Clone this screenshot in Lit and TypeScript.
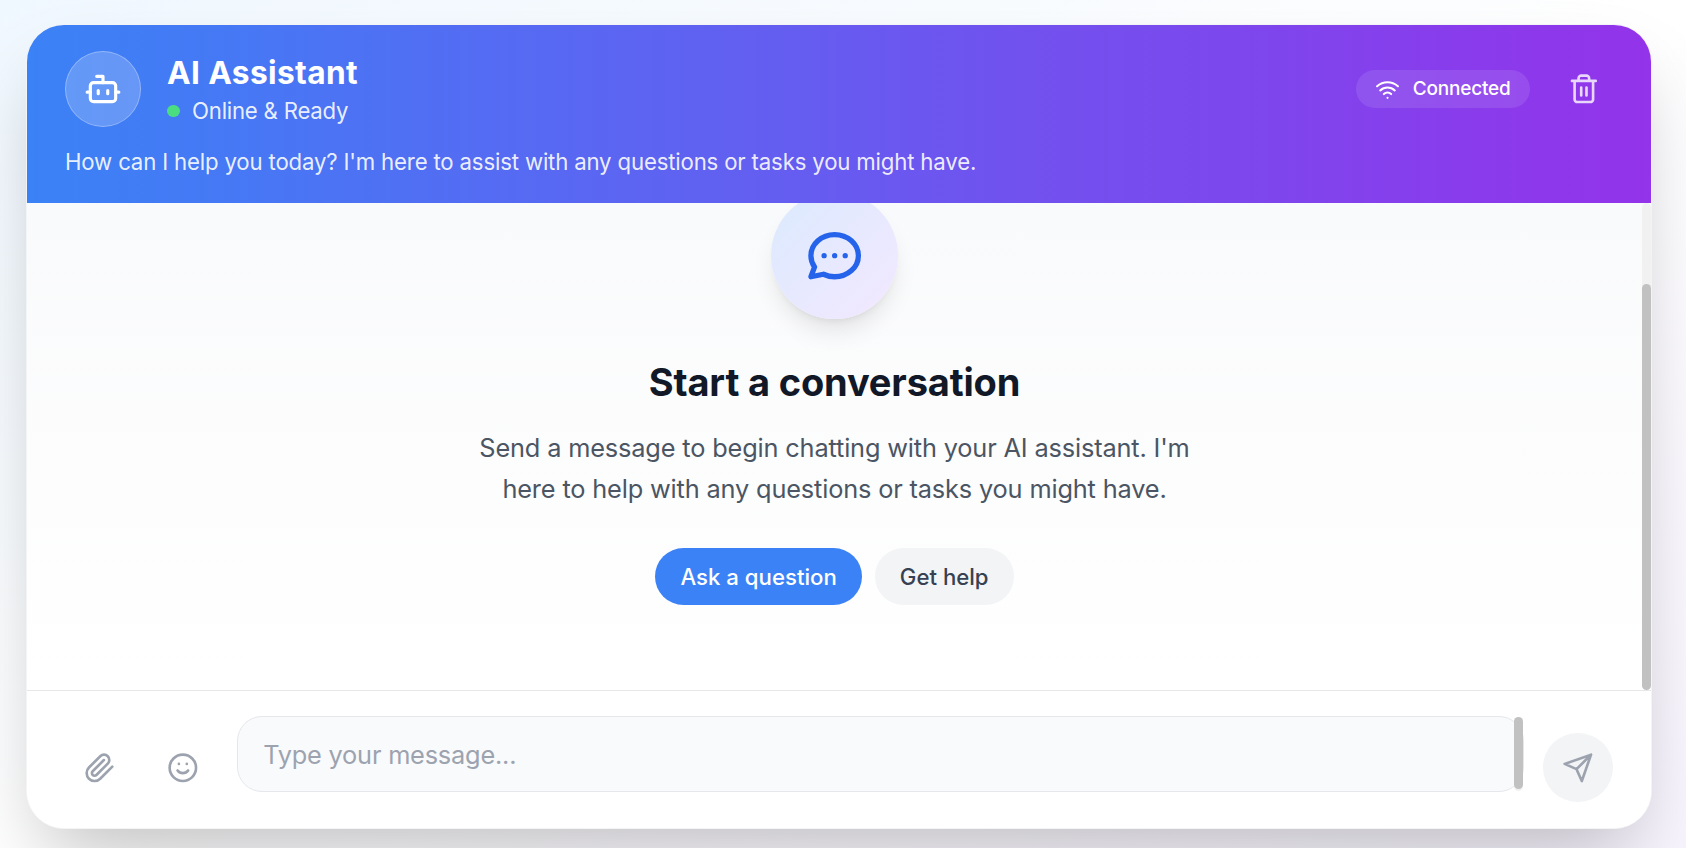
import { LitElement, html, css, svg } from "lit";
import { customElement } from "lit/decorators.js";

const icons = {
  bot: svg`<path d="M12 8V4H8"/><rect width="16" height="12" x="4" y="8" rx="2"/><path d="M2 14h2M20 14h2M15 13v2M9 13v2"/>`,
  wifi: svg`<path d="M12 20h.01M2 8.82a15 15 0 0 1 20 0M5 12.859a10 10 0 0 1 14 0M8.5 16.429a5 5 0 0 1 7 0"/>`,
  trash: svg`<path d="M3 6h18M19 6v14c0 1-1 2-2 2H7c-1 0-2-1-2-2V6M8 6V4c0-1 1-2 2-2h4c1 0 2 1 2 2v2M10 11v6M14 11v6"/>`,
  chat: svg`<path d="M8 12h.01M12 12h.01M16 12h.01M21 12c0 4.418-4.03 8-9 8a9.863 9.863 0 01-4.255-.949L3 20l1.395-3.72C3.512 15.042 3 13.574 3 12c0-4.418 4.03-8 9-8s9 3.582 9 8z"/>`,
  clip: svg`<path d="m21.44 11.05-9.19 9.19a6 6 0 0 1-8.49-8.49l8.57-8.57A4 4 0 1 1 18 8.84l-8.59 8.57a2 2 0 0 1-2.83-2.83l8.49-8.48"/>`,
  smile: svg`<circle cx="12" cy="12" r="10"/><path d="M8 14s1.5 2 4 2 4-2 4-2M9 9h.01M15 9h.01"/>`,
  send: svg`<path d="m22 2-7 20-4-9-9-4ZM22 2 11 13"/>`,
};

const icon = (name: keyof typeof icons, cls = "") =>
  html`<svg class="icon ${cls}" viewBox="0 0 24 24">${icons[name]}</svg>`;

@customElement("app-root")
export class AppRoot extends LitElement {
  static styles = css`
    :host {
      display: block;
      box-sizing: border-box;
      width: 100vw;
      height: 848px;
      overflow: hidden;
      padding: 24px 34px 19px 26px;
      background: linear-gradient(to bottom right, #f0f8ff, #ffffff 50%, #f9f5ff);
      font-family: Inter, sans-serif;
      color: #111827;
    }
    * { box-sizing: border-box; margin: 0; }
    .icon {
      width: 31.7px; height: 31.7px; display: block; flex: none;
      fill: none; stroke: currentColor; stroke-width: 2;
      stroke-linecap: round; stroke-linejoin: round;
    }
    .card {
      height: 805px;
      display: flex; flex-direction: column;
      border: 1px solid #f3f4f6;
      border-radius: 38px;
      overflow: hidden;
      background: #fff;
      box-shadow: 0 40px 79px -19px rgba(0, 0, 0, 0.25);
    }
    .header {
      height: 178px; flex: none;
      padding: 26px 38px 0;
      background: linear-gradient(to right, #3b82f6, #9333ea);
      color: #fff;
    }
    .bar { display: flex; align-items: center; height: 76px; }
    .avatar {
      width: 76px; height: 76px; margin-right: 26px;
      display: grid; place-items: center;
      border-radius: 50%;
      background: rgba(255, 255, 255, 0.2);
      border: 1px solid rgba(255, 255, 255, 0.3);
    }
    .avatar .icon { width: 38px; height: 38px; }
    .who { flex: 1; }
    .name { font-size: 31.7px; line-height: 44px; font-weight: 700; letter-spacing: 0.36px; }
    .status {
      display: flex; align-items: center; gap: 12px;
      font-size: 22.2px; line-height: 32px; letter-spacing: -0.22px; color: rgba(255, 255, 255, 0.9);
    }
    .dot { width: 13px; height: 12.5px; border-radius: 50%; background: #4ade80; }
    .pill {
      display: flex; align-items: center; gap: 12.5px;
      height: 38px; padding: 0 19.7px 0 19px; border-radius: 19px;
      background: rgba(255, 255, 255, 0.1);
      font-size: 19px; font-weight: 500; letter-spacing: -0.2px;
    }
    .pill span { padding-bottom: 1px; }
    .pill .icon { width: 25px; height: 25px; }
    .trash { margin: 0 13px 0 38px; color: rgba(255, 255, 255, 0.8); }
    .intro {
      margin-top: 19px; font-size: 22.2px; line-height: 32px;
      letter-spacing: -0.165px; color: rgba(255, 255, 255, 0.9);
    }
    .body {
      flex: 1; min-height: 0; display: flex; overflow: hidden;
      background: linear-gradient(to bottom, #f9fafb, #ffffff);
    }
    .empty {
      flex: 1; display: flex; flex-direction: column; align-items: center;
      margin-top: -11px; text-align: center;
    }
    .bubble {
      width: 127px; height: 127px; flex: none;
      display: grid; place-items: center; border-radius: 50%;
      background: linear-gradient(to bottom right, #dbeafe, #f3e8ff);
      color: #2563eb;
      box-shadow: 0 16px 24px -5px rgba(0, 0, 0, 0.1), 0 6px 10px -6px rgba(0, 0, 0, 0.1);
    }
    .bubble .icon { width: 63.3px; height: 63.3px; }
    .title { margin-top: 38px; font-size: 38px; line-height: 51px; font-weight: 700; letter-spacing: -0.16px; }
    .text {
      width: 730px; margin-top: 19px; font-size: 25.33px; line-height: 41px;
      letter-spacing: -0.155px; color: #4b5563;
    }
    .actions { display: flex; gap: 13px; margin-top: 39px; }
    .chip {
      height: 57px; padding: 0 25px; border: 0; border-radius: 29px;
      font: 500 22.2px/56px Inter, sans-serif;
      background: #f3f4f6; color: #374151;
    }
    .chip.primary { background: #3b82f6; color: #fff; }
    .track { width: 9px; padding-top: 81px; background: #f1f1f1; border-radius: 5px; }
    .thumb { height: 100%; background: #c1c1c1; border-radius: 5px; }
    .footer {
      height: 138px; flex: none;
      display: flex; align-items: flex-start;
      padding: 25px 38px 0;
      border-top: 1px solid #e5e7eb;
      background: #fff;
    }
    .tool {
      width: 69.7px; height: 69.7px; margin: 16.6px 13.5px 0 0; padding: 0;
      display: grid; place-items: center; flex: none;
      border: 0; border-radius: 50%; background: none; color: #9ca3af;
    }
    .tool.last { margin-right: 19.3px; }
    .tool.send { margin: 16.6px 0 0 19px; background: #f3f4f6; }
    .wrap { flex: 1; display: flex; position: relative; }
    .field {
      flex: 1; height: 76px; display: flex; overflow: hidden;
      border: 1px solid #e5e7eb; border-radius: 25px;
      background: #f9fafb;
    }
    .placeholder {
      flex: 1; padding-left: 25px; font-size: 25.33px; line-height: 76px;
      letter-spacing: -0.2px; color: #9ca3af;
    }
    .grip {
      position: absolute; right: 1px; top: 1px;
      width: 9px; height: 74px; padding-bottom: 2px;
      background: #f1f1f1; border-radius: 5px;
    }
  `;

  render() {
    return html`
      <div class="card">
        <div class="header">
          <div class="bar">
            <div class="avatar">${icon("bot")}</div>
            <div class="who">
              <div class="name">AI Assistant</div>
              <div class="status"><span class="dot"></span>Online &amp; Ready</div>
            </div>
            <div class="pill">${icon("wifi")}<span>Connected</span></div>
            ${icon("trash", "trash")}
          </div>
          <div class="intro">How can I help you today? I'm here to assist with any questions or tasks you might have.</div>
        </div>
        <div class="body">
          <div class="empty">
            <div class="bubble">${icon("chat")}</div>
            <div class="title">Start a conversation</div>
            <div class="text">Send a message to begin chatting with your AI assistant. I'm here to help with any questions or tasks you might have.</div>
            <div class="actions">
              <button class="chip primary">Ask a question</button>
              <button class="chip">Get help</button>
            </div>
          </div>
          <div class="track"><div class="thumb"></div></div>
        </div>
        <div class="footer">
          <button class="tool">${icon("clip")}</button>
          <button class="tool last">${icon("smile")}</button>
          <div class="wrap">
            <div class="field"><div class="placeholder">Type your message...</div></div>
            <div class="grip"><div class="thumb"></div></div>
          </div>
          <button class="tool send">${icon("send")}</button>
        </div>
      </div>
    `;
  }
}
